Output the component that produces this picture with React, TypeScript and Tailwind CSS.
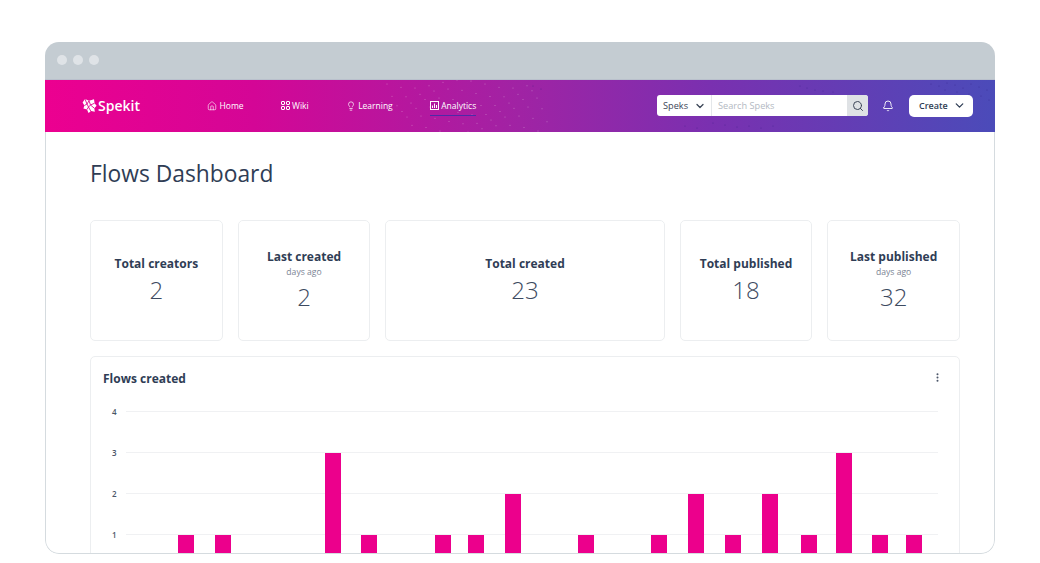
import { Bell, ChevronDown, Home, Lightbulb, MoreVertical, Search } from 'lucide-react';

const BARS = [
  { x: 178, v: 1 }, { x: 215, v: 1 }, { x: 325, v: 3 }, { x: 361, v: 1 },
  { x: 435, v: 1 }, { x: 468, v: 1 }, { x: 505, v: 2 }, { x: 578, v: 1 },
  { x: 651, v: 1 }, { x: 688, v: 2 }, { x: 725, v: 1 }, { x: 762, v: 2 },
  { x: 801, v: 1 }, { x: 836, v: 3 }, { x: 872, v: 1 }, { x: 906, v: 1 },
];

// speckled waves on the nav bar
const WAVE_DOTS = Array.from({ length: 66 }, (_, i) => {
  const row = i % 6;
  const col = Math.floor(i / 6);
  return { x: 342 + col * 14 + row * 5, y: 4 + row * 9 + Math.sin(col * 0.9 + row) * 4 };
});

const DARK_DOTS = [
  [755, 6], [762, 8], [770, 10], [778, 11], [788, 12], [640, 46], [652, 48], [668, 43], [680, 45], [692, 47],
  [704, 46], [716, 48], [728, 46], [886, 4], [894, 6], [902, 3], [910, 5], [918, 8], [926, 4], [934, 7], [942, 10],
  [900, 10], [912, 12], [924, 14], [936, 16], [944, 20], [488, 6], [496, 9],
];

function LogoMark() {
  return (
    <svg width="15" height="16" viewBox="0 0 15 16" aria-hidden>
      <path d="M3 1 7 2.800 12 1.200l.6 4 2 2.600-2.300 2.400.5 3.600-3.600-.9L6.500 15 5 11.500 1.400 10.600 2.400 7.500.6 4.500z" fill="#fff" />
      <path d="M3 1 5 6 7 2.800 8.500 7l4.100-1.800M2.400 7.500 5 6l1.500 3L8.500 7l3.800 3.200M5 11.500 6.500 9l2.700 4.900" fill="none" stroke="#e0088f" strokeWidth="0.9" />
    </svg>
  );
}

function WikiIcon() {
  return (
    <svg width="9" height="9" viewBox="0 0 9 9" fill="none" stroke="#fff" strokeWidth="1" aria-hidden>
      <rect x="0.500" y="0.500" width="3" height="3" rx="0.500" />
      <rect x="5.500" y="0.500" width="3" height="3" rx="0.500" />
      <rect x="0.500" y="5.500" width="3" height="3" rx="0.500" />
      <rect x="5.500" y="5.500" width="3" height="3" rx="0.500" />
    </svg>
  );
}

function AnalyticsIcon() {
  return (
    <svg width="9" height="9" viewBox="0 0 9 9" fill="none" stroke="#fff" strokeWidth="1" aria-hidden>
      <rect x="0.500" y="0.500" width="8" height="8" />
      <path d="M2.500 7V4.500M4.500 7V2.500M6.500 7V4" />
    </svg>
  );
}

function NavItem({ icon, label, active }: { icon: React.ReactNode; label: string; active?: boolean }) {
  return (
    <div className="relative flex items-center gap-[2.500px] text-[8.500px] leading-[12px] text-white">
      {icon}
      <span>{label}</span>
      {active && <div className="absolute -bottom-[4px] left-0 right-0 h-px bg-[#4d2ba8]" />}
    </div>
  );
}

function StatCard({ title, value, sub, className }: { title: string; value: string; sub?: string; className: string }) {
  return (
    <div className={`flex h-[121px] flex-col items-center justify-center rounded-[5px] border border-[#eceef0] ${className}`}>
      <div className="text-[12px] font-bold leading-[18px] text-[#2f3d55]">{title}</div>
      {sub && <div className="text-[8.600px] leading-[12px] text-[#7b8494]">{sub}</div>}
      <div className={`text-[24px] font-light leading-[34px] text-[#3d4a60] ${sub ? 'mt-[2px]' : ''}`}>{value}</div>
    </div>
  );
}

function FlowsChart() {
  const y = (v: number) => 54.5 + (4 - v) * 41;
  return (
    <svg width="868" height="198" viewBox="0 0 868 198" className="block" aria-hidden>
      {[4, 3, 2, 1].map((v) => (
        <g key={v}>
          <line x1="35" x2="847" y1={y(v)} y2={y(v)} stroke="#f0f1f3" strokeWidth="1" />
          <text x="21" y={y(v) + 3} textAnchor="start" fontSize="8" fill="#4a5568" fontWeight="600">{v}</text>
        </g>
      ))}
      {BARS.map((b) => (
        <rect key={b.x} x={b.x - 91} y={y(b.v) + 0.5} width="16" height={198 - y(b.v)} fill="#ec008c" />
      ))}
    </svg>
  );
}

export default function App() {
  return (
    <div className="h-[563px] w-[1040px] overflow-hidden bg-white pl-[45px] pt-[42px] font-['Open_Sans',sans-serif]">
      <div className="flex h-[512px] w-[950px] flex-col overflow-hidden rounded-[14px] bg-white">
        {/* browser chrome */}
        <div className="flex h-[37px] shrink-0 items-center gap-[6px] bg-[#c4ccd2] pb-[1px] pl-[12px]">
          <div className="h-[10px] w-[10px] rounded-full bg-[#dfe3e7]" />
          <div className="h-[10px] w-[10px] rounded-full bg-[#dfe3e7]" />
          <div className="h-[10px] w-[10px] rounded-full bg-[#dfe3e7]" />
        </div>

        {/* nav bar */}
        <div className="relative flex h-[53px] shrink-0 items-center border-t border-[#b9c0cc] bg-[linear-gradient(90deg,#ec0090_0%,#d40696_22%,#a023a4_50%,#7a30b0_70%,#4b4bb9_100%)] pb-[1px] pl-[37px] pr-[22px]">
          <svg className="pointer-events-none absolute inset-0" width="950" height="53" aria-hidden>
            {WAVE_DOTS.map((d) => (
              <circle key={`${d.x}-${d.y}`} cx={d.x} cy={d.y} r="0.500" fill="#ffffff" fillOpacity="0.4" />
            ))}
            {DARK_DOTS.map(([x, y]) => (
              <circle key={`${x}-${y}`} cx={x} cy={y} r="0.500" fill="#2d1f80" fillOpacity="0.55" />
            ))}
          </svg>
          <div className="relative flex w-[125px] items-center gap-[1px] text-[14px] font-semibold text-white">
            <LogoMark />
            <span>Spekit</span>
          </div>
          <div className="relative flex items-center gap-[37px]">
            <NavItem icon={<Home size={10} strokeWidth={1.5} />} label="Home" />
            <NavItem icon={<WikiIcon />} label="Wiki" />
            <NavItem icon={<Lightbulb size={10} strokeWidth={1.7} />} label="Learning" />
            <NavItem icon={<AnalyticsIcon />} label="Analytics" active />
          </div>
          <div className="relative ml-auto flex h-[21px] w-[211px] overflow-hidden rounded-[3px] bg-white text-[9.200px]">
            <div className="flex w-[55px] items-center justify-between border-r border-[#e4e7ea] pl-[6px] pr-[5px] text-[#3c4657]">
              <span>Speks</span>
              <ChevronDown size={12} strokeWidth={2.6} />
            </div>
            <div className="flex flex-1 items-center pl-[6px] text-[#b3b9c2]">Search Speks</div>
            <div className="flex w-[21px] items-center justify-center bg-[#dfe2e5] text-[#3c4657]">
              <Search size={12} strokeWidth={2} />
            </div>
          </div>
          <Bell size={12} strokeWidth={1.8} className="relative ml-[14px] text-white" />
          <div className="relative ml-[15px] flex h-[22px] w-[64px] items-center justify-between rounded-[5px] bg-white pl-[10px] pr-[7px] text-[9px] font-semibold text-[#2f3d55]">
            <span>Create</span>
            <ChevronDown size={13} strokeWidth={2.4} />
          </div>
        </div>

        {/* page body */}
        <div className="min-h-0 flex-1 overflow-hidden rounded-b-[14px] border-x border-b border-[#d5dbdf] pl-[44px]">
          <h1 className="pt-[25px] text-[22.800px] leading-[34px] text-[#2f3d55]">Flows Dashboard</h1>
          <div className="mt-[29px] flex w-[870px] gap-[15px]">
            <StatCard className="w-[133px]" title="Total creators" value="2" />
            <StatCard className="w-[133px]" title="Last created" sub="days ago" value="2" />
            <StatCard className="w-[280px]" title="Total created" value="23" />
            <StatCard className="w-[133px]" title="Total published" value="18" />
            <StatCard className="w-[133px]" title="Last published" sub="days ago" value="32" />
          </div>
          <div className="mt-[15px] w-[870px] rounded-t-[5px] border border-[#eceef0]">
            <div className="flex h-0 items-start justify-between pl-[12px] pr-[16px] text-[12px] font-bold text-[#2f3d55]">
              <span className="pt-[13px] leading-[17px]">Flows created</span>
              <MoreVertical size={11} strokeWidth={2.4} className="mt-[15px] text-[#4a5568]" />
            </div>
            <FlowsChart />
          </div>
        </div>
      </div>
    </div>
  );
}
